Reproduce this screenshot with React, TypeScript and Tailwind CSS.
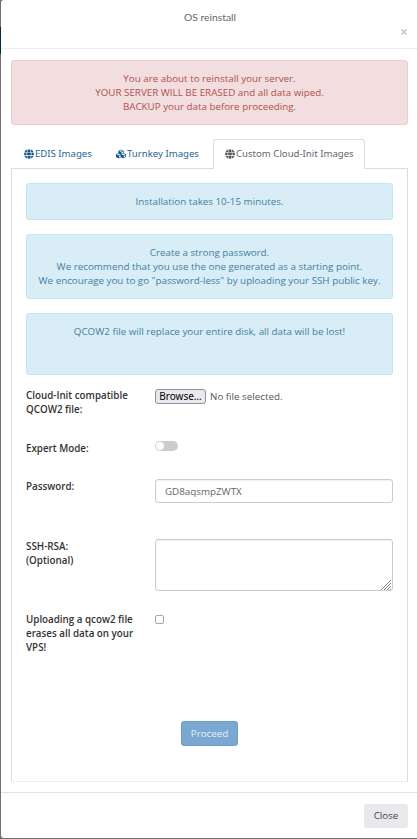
import type { ReactNode } from 'react';
import { FaGlobe, FaCubes } from 'react-icons/fa';

function Info({ className, children }: { className: string; children: ReactNode }) {
  return (
    <div className={`rounded-[3px] border border-[#bce8f1] bg-[#d9edf7] pt-[11px] text-center text-[#417f9f] ${className}`}>
      {children}
    </div>
  );
}

function Row({ label, className, children }: { label: ReactNode; className: string; children: ReactNode }) {
  return (
    <div className={`flex items-start ${className}`}>
      <div className="w-[129px] shrink-0 pt-px font-semibold whitespace-nowrap text-[#333]">{label}</div>
      {children}
    </div>
  );
}

export default function App() {
  return (
    <div className="flex h-[839px] w-[417px] overflow-hidden bg-[#707070] font-['Open_Sans','Noto_Sans',sans-serif] text-[9.8px] leading-[14px]">
      <div className="w-px shrink-0 pt-[27px]">
        <div className="h-[27px] w-px bg-[#002b45]" />
      </div>
      <div className="flex h-[838px] w-[416px] flex-col rounded-l-[3px] bg-white">
        <header className="h-[49px] shrink-0 border-b border-[#ededed] pt-[10px] text-center text-[#666]">
          <h4 className="pl-[2px] font-['Lato',sans-serif] text-[10.3px] leading-[14px]">OS reinstall</h4>
          <div className="flex justify-end pr-[9px]">
            <button className="text-[14px] leading-[16px] font-bold text-[#ccc]">×</button>
          </div>
        </header>

        <div className="mx-[10px] mt-[11px] h-[65px] w-[397px] shrink-0 rounded-[3px] border border-[#ebccd1] bg-[#f2dede] pt-[11px] text-center text-[#b05050]">
          <p>You are about to reinstall your server.</p>
          <p>YOUR SERVER WILL BE ERASED and all data wiped.</p>
          <p>BACKUP your data before proceeding.</p>
        </div>

        <nav className="z-10 mt-[14px] mb-[-1px] ml-[10px] flex h-[30px] shrink-0 font-['Noto_Sans',sans-serif] text-[9.6px] text-[#1c6596]">
          <a className="flex w-[92px] items-center pb-px pl-[13px] whitespace-nowrap"><FaGlobe className="mr-px size-[10px] text-[#14588a]" />EDIS Images</a>
          <a className="flex w-[110px] items-center pb-px pl-[13px] whitespace-nowrap"><FaCubes className="mr-px size-[10px] text-[#14588a]" />Turnkey Images</a>
          <a className="flex w-[152px] items-center rounded-t-[3px] border border-b-0 border-[#ddd] bg-white pb-[2px] pl-[11px] whitespace-nowrap text-[#666]"><FaGlobe className="mr-px size-[10px] text-[#555]" />Custom Cloud-Init Images</a>
        </nav>

        <main className="ml-[10px] h-[614px] w-[397px] shrink-0 border border-[#ddd] border-b-[#eee] px-[14px] pt-[14px]">
          <Info className="h-[37px]">Installation takes 10-15 minutes.</Info>
          <Info className="mt-[14px] h-[65px]">
            <p>Create a strong password.</p>
            <p>We recommend that you use the one generated as a starting point.</p>
            <p className="whitespace-nowrap">We encourage you to go "password-less" by uploading your SSH public key.</p>
          </Info>
          <Info className="mt-[14px] h-[62px]">QCOW2 file will replace your entire disk, all data will be lost!</Info>

          <Row className="mt-[13px] h-[53px]" label={<>Cloud-Init compatible<br />QCOW2 file:</>}>
            <div className="mt-px flex items-center text-[#555]">
              <button className="mr-[4px] h-[15px] w-[51px] rounded-[3px] border border-[#8f8f9d] bg-[#e9e9ed] font-['Noto_Sans',sans-serif] text-[10px] leading-[13px] text-black">Browse…</button>
              No file selected.
            </div>
          </Row>
          <Row className="h-[38px]" label="Expert Mode:">
            <div className="h-[10px] w-[23px] rounded-full bg-[#ccc] p-px">
              <div className="size-[8px] rounded-full bg-white" />
            </div>
          </Row>
          <Row className="h-[60px]" label="Password:">
            <input defaultValue="GD8aqsmpZWTX" className="h-[24px] w-[238px] rounded-[3px] border border-[#ccc] px-[9px] text-[#666] shadow-[inset_0_1px_1px_rgba(0,0,0,0.06)]" />
          </Row>
          <Row className="h-[73px]" label={<>SSH-RSA:<br />(Optional)</>}>
            <div className="relative h-[52px] w-[238px]">
              <textarea className="block h-[52px] w-[238px] resize-none rounded-[3px] border border-[#ccc] shadow-[inset_0_1px_1px_rgba(0,0,0,0.06)]" />
              <svg className="pointer-events-none absolute right-[2px] bottom-[1px] size-[10px]" viewBox="0 0 10 10" fill="none" stroke="#666" strokeWidth="0.8">
                <path d="M0 10L10 0M3 10L10 3M6 10L10 6M8.5 10L10 8.5" />
              </svg>
            </div>
          </Row>
          <Row className="h-[109px]" label={<>Uploading a qcow2 file<br />erases all data on your<br />VPS!</>}>
            <span className="mt-[3px] size-[9px] rounded-[2px] border border-[#a5a5b0]" />
          </Row>
          <div className="flex justify-center">
            <button className="h-[25px] w-[57px] rounded-[3px] border border-[#6f9fc9] bg-[#7aa8d1] text-[#e8f0f7]">Proceed</button>
          </div>
        </main>

        <footer className="mt-[10px] flex h-[46px] shrink-0 justify-end border-t border-[#e2e2e2] pt-[11px] pr-[9px]">
          <button className="h-[24px] w-[44px] rounded-[3px] bg-[#e9e9ed] pb-px text-[#444]">Close</button>
        </footer>
      </div>
    </div>
  );
}
